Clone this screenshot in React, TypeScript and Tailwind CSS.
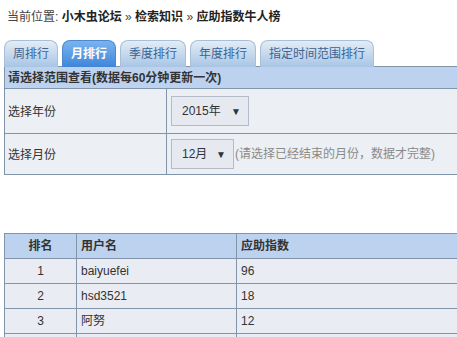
import React from 'react';

const tabs = ['周排行', '月排行', '季度排行', '年度排行', '指定时间范围排行'];

const rows = [
  { rank: 1, name: 'baiyuefei', score: 96 },
  { rank: 2, name: 'hsd3521', score: 18 },
  { rank: 3, name: '阿努', score: 12 },
  { rank: 4, name: '', score: '' },
];

const App: React.FC = () => {
  return (
    <div className="w-[457px] h-[337px] overflow-hidden bg-white text-[12px] text-[#333] font-['Liberation_Sans','Noto_Sans_CJK_SC',sans-serif]">
      {/* breadcrumb */}
      <div className="h-[40px] pl-[7px] pt-[9px] leading-[16px] text-[#444]">
        当前位置: <b className="text-[#222]">小木虫论坛</b> » <b className="text-[#222]">检索知识</b> » <b className="text-[#222]">应助指数牛人榜</b>
      </div>

      <div className="ml-[4px] w-[480px]">
        {/* tabs */}
        <div className="flex items-end gap-[4px] h-[27px] -mb-px relative">
          {tabs.map((t, i) => (
            <div
              key={t}
              className={
                i === 1
                  ? 'h-[27px] px-[8px] flex items-center rounded-t-[8px] border border-b-0 border-[#4d88cc] bg-gradient-to-b from-[#79b4f0] to-[#3f86d8] text-white font-bold'
                  : 'h-[27px] px-[8px] flex items-center rounded-t-[8px] border border-b-0 border-[#a9bfd8] bg-gradient-to-b from-[#e3ecf5] to-[#a9c5e4] text-[#3a6494]'
              }
            >
              {t}
            </div>
          ))}
        </div>

        {/* range panel */}
        <div className="border border-[#8195aa]">
          <div className="h-[22px] pl-[3px] flex items-center bg-[#bcd2ee] font-bold text-[#333] border-b border-[#8195aa]">
            请选择范围查看(数据每60分钟更新一次)
          </div>
          <div className="flex h-[45px] bg-[#eceff4] border-b border-[#8195aa]">
            <div className="w-[162px] pl-[3px] pt-[2px] flex items-center border-r border-[#8195aa]">选择年份</div>
            <div className="flex items-center pl-[4px]">
              <div className="w-[78px] h-[30px] flex items-center justify-between pl-[10px] pr-[7px] bg-[#e6e9ef] border border-[#b3bcc8]">
                <span>2015年</span>
                <span className="text-[10px]">▼</span>
              </div>
            </div>
          </div>
          <div className="flex h-[40px] bg-[#eceff4]">
            <div className="w-[162px] pl-[3px] pt-[2px] flex items-center border-r border-[#8195aa]">选择月份</div>
            <div className="flex items-center pl-[4px]">
              <div className="w-[63px] h-[30px] flex items-center justify-between pl-[10px] pr-[7px] bg-[#e6e9ef] border border-[#b3bcc8]">
                <span>12月</span>
                <span className="text-[10px]">▼</span>
              </div>
              <span className="ml-[1px] text-[#8a8a8a]">(请选择已经结束的月份，数据才完整)</span>
            </div>
          </div>
        </div>

        {/* ranking table */}
        <table className="mt-[58px] w-[480px] border-collapse">
          <thead>
            <tr className="h-[25px] bg-[#bcd2ee]">
              <th className="w-[72px] border border-[#8195aa] text-center font-bold">排名</th>
              <th className="w-[160px] border border-[#8195aa] text-left pl-[4px] font-bold">用户名</th>
              <th className="border border-[#8195aa] text-left pl-[4px] font-bold">应助指数</th>
            </tr>
          </thead>
          <tbody>
            {rows.map((r) => (
              <tr key={r.rank} className="h-[25px] bg-[#e9ecf2]">
                <td className="border border-[#8195aa] text-center">{r.rank <= 3 ? r.rank : ''}</td>
                <td className="border border-[#8195aa] pl-[4px]">{r.name}</td>
                <td className="border border-[#8195aa] pl-[4px]">{r.score}</td>
              </tr>
            ))}
          </tbody>
        </table>
      </div>
    </div>
  );
};

export default App;
